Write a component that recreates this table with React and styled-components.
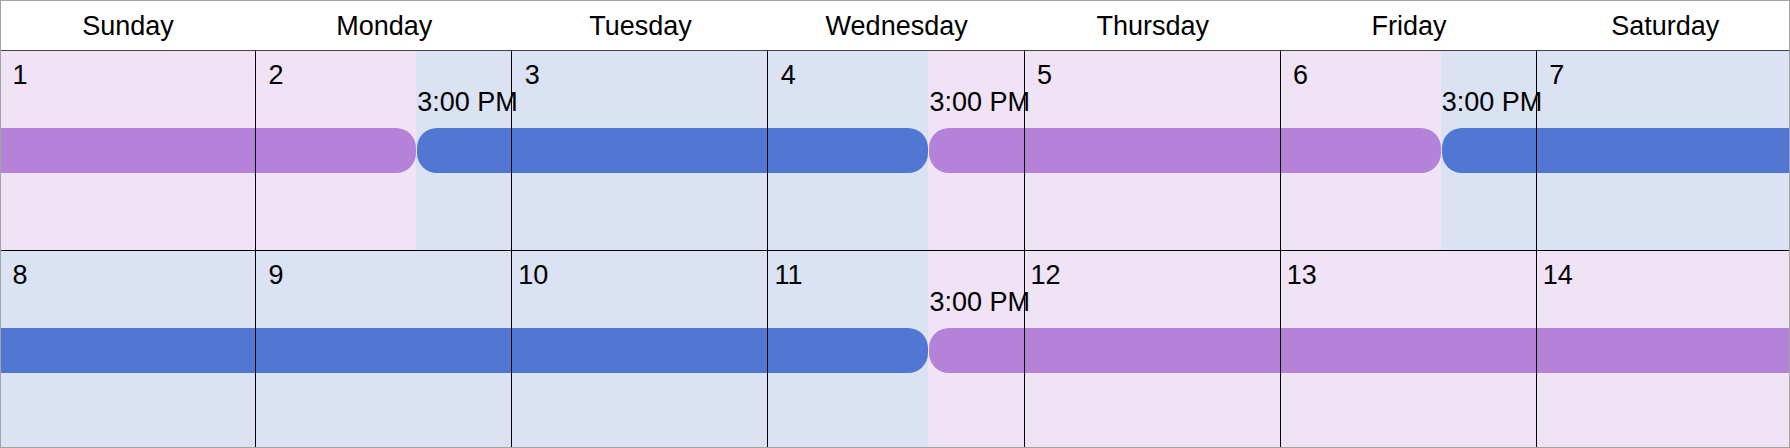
import React from "react";
import styled, { createGlobalStyle } from "styled-components";

const GlobalStyle = createGlobalStyle`
  html, body {
    margin: 0;
    padding: 0;
    background: #fff;
  }
`;

// one day = 256.2px, split into 24 hour tracks
const DAY = 256.2;
const HOUR = DAY / 24;

const tones = {
  purple: { shade: "#efe3f5", bar: "#b482d9" },
  blue: { shade: "#dbe2f3", bar: "#5177d3" },
};

const Calendar = styled.div`
  box-sizing: border-box;
  width: 1790px;
  height: 448px;
  border: 1px solid #a3a3a3;
  overflow: hidden;
  background: #fff;
  color: #000;
  font-family: "Liberation Sans", Arial, sans-serif;
  font-size: 27px;
`;

const Header = styled.div`
  display: grid;
  grid-template-columns: repeat(7, ${DAY}px);
  align-items: center;
  height: 49px;
  margin-left: -1px;
  border-bottom: 1px solid #444;
`;

const DayName = styled.div`
  text-align: center;
  line-height: 30px;
`;

const Week = styled.div`
  display: grid;
  grid-template-columns: repeat(168, ${HOUR}px);
  grid-template-rows: 36px 30px 11px 45px 1fr;
  height: 199px;
  margin-left: -1px;
  border-bottom: 1px solid #000;
`;

const Shade = styled.div`
  grid-row: 1 / -1;
  grid-column: ${(p) => p.$from + 1} / ${(p) => p.$to + 1};
  background: ${(p) => tones[p.$tone].shade};
`;

const Bar = styled.div`
  grid-row: 4;
  grid-column: ${(p) => p.$from + 1} / ${(p) => p.$to + 1};
  background: ${(p) => tones[p.$tone].bar};
  margin-left: ${(p) => (p.$roundStart ? "1px" : "0")};
  border-radius: ${(p) => (p.$roundStart ? "20px" : "0")}
    ${(p) => (p.$roundEnd ? "20px" : "0")}
    ${(p) => (p.$roundEnd ? "20px" : "0")}
    ${(p) => (p.$roundStart ? "20px" : "0")};
`;

const TimeLabel = styled.div`
  grid-row: 2;
  grid-column: ${(p) => p.$from + 1} / ${(p) => p.$to + 1};
  white-space: nowrap;
  line-height: 30px;
  padding-left: 1px;
`;

const Day = styled.div`
  grid-row: 1 / -1;
  grid-column: ${(p) => p.$index * 24 + 1} / span 24;
  border-right: ${(p) => (p.$index < 6 ? "1px solid #000" : "none")};
`;

const DayNumber = styled.span`
  display: block;
  width: 28px;
  margin: 9px 0 0 6px;
  text-align: center;
  line-height: 30px;
`;

const dayNames = [
  "Sunday",
  "Monday",
  "Tuesday",
  "Wednesday",
  "Thursday",
  "Friday",
  "Saturday",
];

// hours counted from sunday 00:00 of each week
const weeks = [
  {
    start: 1,
    events: [
      { from: 0, to: 39, tone: "purple", startsHere: false, endsHere: true },
      { from: 39, to: 87, tone: "blue", startsHere: true, endsHere: true },
      { from: 87, to: 135, tone: "purple", startsHere: true, endsHere: true },
      { from: 135, to: 168, tone: "blue", startsHere: true, endsHere: false },
    ],
  },
  {
    start: 8,
    events: [
      { from: 0, to: 87, tone: "blue", startsHere: false, endsHere: true },
      { from: 87, to: 168, tone: "purple", startsHere: true, endsHere: false },
    ],
  },
];

export default function App() {
  return (
    <>
      <GlobalStyle />
      <Calendar>
        <Header>
          {dayNames.map((name) => (
            <DayName key={name}>{name}</DayName>
          ))}
        </Header>
        {weeks.map((week) => (
          <Week key={week.start}>
            {week.events.map((ev) => (
              <Shade key={"s" + ev.from} $from={ev.from} $to={ev.to} $tone={ev.tone} />
            ))}
            {week.events.map((ev) => (
              <Bar
                key={"b" + ev.from}
                $from={ev.from}
                $to={ev.to}
                $tone={ev.tone}
                $roundStart={ev.startsHere}
                $roundEnd={ev.endsHere}
              />
            ))}
            {week.events
              .filter((ev) => ev.startsHere)
              .map((ev) => (
                <TimeLabel key={"l" + ev.from} $from={ev.from} $to={ev.to}>
                  3:00 PM
                </TimeLabel>
              ))}
            {dayNames.map((name, i) => (
              <Day key={name} $index={i}>
                <DayNumber>{week.start + i}</DayNumber>
              </Day>
            ))}
          </Week>
        ))}
      </Calendar>
    </>
  );
}
